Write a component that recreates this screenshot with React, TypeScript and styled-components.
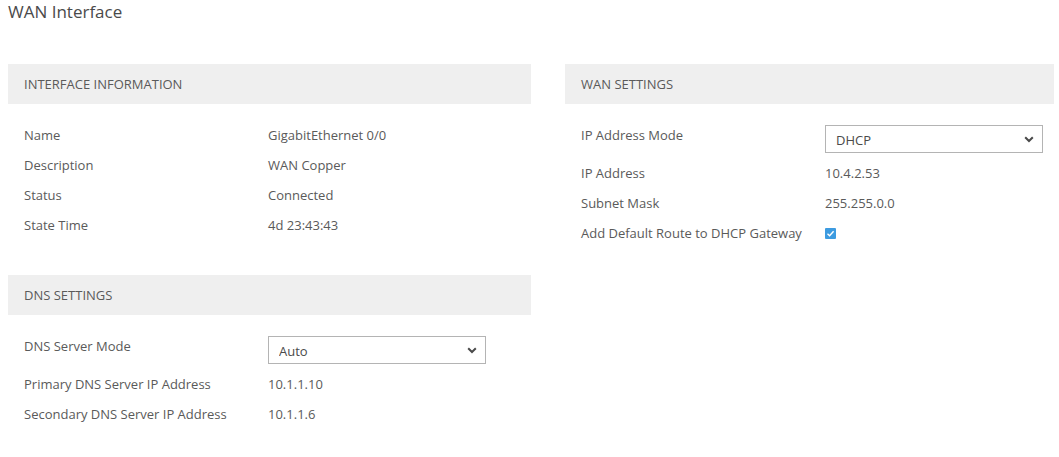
import React from 'react';
import styled, { createGlobalStyle } from 'styled-components';

const GlobalStyle = createGlobalStyle`
  html, body {
    margin: 0;
    padding: 0;
    background: #ffffff;
  }
  body {
    font-family: 'Open Sans', 'Noto Sans', sans-serif;
    color: #555555;
  }
`;

const Page = styled.div`
  padding: 0 8px;
  width: 1059px;
  box-sizing: border-box;
`;

const Title = styled.h1`
  margin: 0;
  font-size: 17px;
  font-weight: 400;
  line-height: 24px;
  color: #4a4a4a;
`;

const Columns = styled.div`
  display: grid;
  grid-template-columns: 523px 489px;
  column-gap: 34px;
  margin-top: 40px;
  align-items: start;
`;

const Column = styled.div`
  display: flex;
  flex-direction: column;
  gap: 20px;
`;

const Panel = styled.section``;

const PanelHeader = styled.div`
  height: 40px;
  background: #efefef;
  display: flex;
  align-items: center;
  padding: 0 16px;
  font-size: 13px;
  color: #5a5a5a;
  text-transform: uppercase;
`;

const PanelBody = styled.div`
  padding: 16px 16px 15px;
`;

const Row = styled.div`
  display: grid;
  grid-template-columns: 244px 1fr;
  align-items: start;
  padding: 5px 0;
  font-size: 13px;
  line-height: 20px;
`;

const Label = styled.div`
  color: #5a5a5a;
`;

const Value = styled.div`
  color: #5a5a5a;
`;

const SelectWrap = styled.div`
  position: relative;
  width: 218px;
  height: 28px;
`;

const Select = styled.select`
  appearance: none;
  width: 100%;
  height: 100%;
  box-sizing: border-box;
  border: 1px solid #b4b4b4;
  background: #ffffff;
  border-radius: 0;
  padding: 2px 28px 0 10px;
  font-family: 'Open Sans', 'Noto Sans', sans-serif;
  font-size: 13px;
  color: #4a4a4a;
  outline: none;
`;

const Chevron = styled.svg`
  position: absolute;
  right: 9px;
  top: 11px;
  pointer-events: none;
`;

const Check = styled.span`
  display: inline-flex;
  align-items: center;
  justify-content: center;
  width: 11px;
  height: 11px;
  margin-top: 5px;
  background: #3d9be0;
  border-radius: 1px;
`;

const Dropdown: React.FC<{ value: string }> = ({ value }) => (
  <SelectWrap>
    <Select defaultValue={value}>
      <option>{value}</option>
    </Select>
    <Chevron width="10" height="7" viewBox="0 0 10 7">
      <path d="M1.2 1.2 L5 5 L8.8 1.2" fill="none" stroke="#4a4a4a" strokeWidth="2" />
    </Chevron>
  </SelectWrap>
);

const interfaceRows = [
  ['Name', 'GigabitEthernet 0/0'],
  ['Description', 'WAN Copper'],
  ['Status', 'Connected'],
  ['State Time', '4d 23:43:43'],
];

export default function App() {
  return (
    <Page>
      <GlobalStyle />
      <Title>WAN Interface</Title>
      <Columns>
        <Column>
          <Panel>
            <PanelHeader>Interface Information</PanelHeader>
            <PanelBody>
              {interfaceRows.map(([k, v]) => (
                <Row key={k}>
                  <Label>{k}</Label>
                  <Value>{v}</Value>
                </Row>
              ))}
            </PanelBody>
          </Panel>
          <Panel>
            <PanelHeader>DNS Settings</PanelHeader>
            <PanelBody>
              <Row>
                <Label>DNS Server Mode</Label>
                <Dropdown value="Auto" />
              </Row>
              <Row>
                <Label>Primary DNS Server IP Address</Label>
                <Value>10.1.1.10</Value>
              </Row>
              <Row>
                <Label>Secondary DNS Server IP Address</Label>
                <Value>10.1.1.6</Value>
              </Row>
            </PanelBody>
          </Panel>
        </Column>
        <Column>
          <Panel>
            <PanelHeader>WAN Settings</PanelHeader>
            <PanelBody>
              <Row>
                <Label>IP Address Mode</Label>
                <Dropdown value="DHCP" />
              </Row>
              <Row>
                <Label>IP Address</Label>
                <Value>10.4.2.53</Value>
              </Row>
              <Row>
                <Label>Subnet Mask</Label>
                <Value>255.255.0.0</Value>
              </Row>
              <Row>
                <Label>Add Default Route to DHCP Gateway</Label>
                <div>
                  <Check>
                    <svg width="9" height="9" viewBox="0 0 9 9">
                      <path d="M1.5 4.8 L3.6 6.8 L7.6 2.2" fill="none" stroke="#fff" strokeWidth="1.4" />
                    </svg>
                  </Check>
                </div>
              </Row>
            </PanelBody>
          </Panel>
        </Column>
      </Columns>
    </Page>
  );
}
